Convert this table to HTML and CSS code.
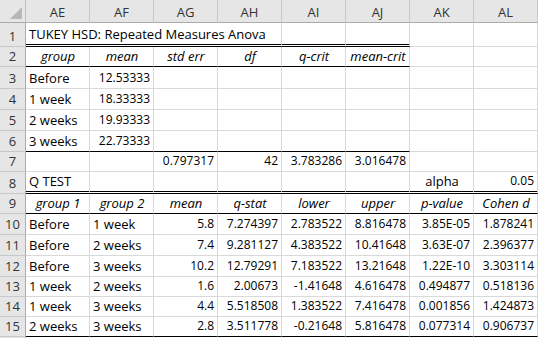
FILE: index.html
```html
<!DOCTYPE html>
<html>
<head>
<meta charset="utf-8">
<link rel="stylesheet" href="styles.css">
</head>
<body>
<div class="sheet">
  <div class="corner"><span class="tri"></span></div>
  <div class="ch">AE</div><div class="ch">AF</div><div class="ch">AG</div><div class="ch">AH</div>
  <div class="ch">AI</div><div class="ch">AJ</div><div class="ch">AK</div><div class="ch">AL</div>

  <div class="rh">1</div>
  <div class="c dbl span4">TUKEY HSD: Repeated Measures Anova</div>
  <div class="c dbl"></div><div class="c dbl"></div><div class="c"></div><div class="c"></div>

  <div class="rh">2</div>
  <div class="c h bb">group</div><div class="c h bb">mean</div><div class="c h bb">std err</div><div class="c h bb">df</div>
  <div class="c h bb">q-crit</div><div class="c h bb">mean-crit</div><div class="c"></div><div class="c"></div>

  <div class="rh">3</div>
  <div class="c">Before</div><div class="c n">12.53333</div><div class="c"></div><div class="c"></div>
  <div class="c"></div><div class="c"></div><div class="c"></div><div class="c"></div>

  <div class="rh">4</div>
  <div class="c">1 week</div><div class="c n">18.33333</div><div class="c"></div><div class="c"></div>
  <div class="c"></div><div class="c"></div><div class="c"></div><div class="c"></div>

  <div class="rh">5</div>
  <div class="c">2 weeks</div><div class="c n">19.93333</div><div class="c"></div><div class="c"></div>
  <div class="c"></div><div class="c"></div><div class="c"></div><div class="c"></div>

  <div class="rh">6</div>
  <div class="c bb">3 weeks</div><div class="c n bb">22.73333</div><div class="c bb"></div><div class="c bb"></div>
  <div class="c bb"></div><div class="c bb"></div><div class="c"></div><div class="c"></div>

  <div class="rh">7</div>
  <div class="c"></div><div class="c"></div><div class="c n">0.797317</div><div class="c n">42</div>
  <div class="c n">3.783286</div><div class="c n">3.016478</div><div class="c"></div><div class="c"></div>

  <div class="rh">8</div>
  <div class="c dbl">Q TEST</div><div class="c dbl"></div><div class="c dbl"></div><div class="c dbl"></div>
  <div class="c dbl"></div><div class="c dbl"></div><div class="c dbl ctr">alpha</div><div class="c dbl n">0.05</div>

  <div class="rh">9</div>
  <div class="c h bb">group 1</div><div class="c h bb">group 2</div><div class="c h bb">mean</div><div class="c h bb">q-stat</div>
  <div class="c h bb">lower</div><div class="c h bb">upper</div><div class="c h bb">p-value</div><div class="c h bb">Cohen d</div>

  <div class="rh">10</div>
  <div class="c">Before</div><div class="c">1 week</div><div class="c n">5.8</div><div class="c n">7.274397</div>
  <div class="c n">2.783522</div><div class="c n">8.816478</div><div class="c n">3.85E-05</div><div class="c n">1.878241</div>

  <div class="rh">11</div>
  <div class="c">Before</div><div class="c">2 weeks</div><div class="c n">7.4</div><div class="c n">9.281127</div>
  <div class="c n">4.383522</div><div class="c n">10.41648</div><div class="c n">3.63E-07</div><div class="c n">2.396377</div>

  <div class="rh">12</div>
  <div class="c">Before</div><div class="c">3 weeks</div><div class="c n">10.2</div><div class="c n">12.79291</div>
  <div class="c n">7.183522</div><div class="c n">13.21648</div><div class="c n">1.22E-10</div><div class="c n">3.303114</div>

  <div class="rh">13</div>
  <div class="c">1 week</div><div class="c">2 weeks</div><div class="c n">1.6</div><div class="c n">2.00673</div>
  <div class="c n">-1.41648</div><div class="c n">4.616478</div><div class="c n">0.494877</div><div class="c n">0.518136</div>

  <div class="rh">14</div>
  <div class="c">1 week</div><div class="c">3 weeks</div><div class="c n">4.4</div><div class="c n">5.518508</div>
  <div class="c n">1.383522</div><div class="c n">7.416478</div><div class="c n">0.001856</div><div class="c n">1.424873</div>

  <div class="rh">15</div>
  <div class="c bb">2 weeks</div><div class="c bb">3 weeks</div><div class="c n bb">2.8</div><div class="c n bb">3.511778</div>
  <div class="c n bb">-0.21648</div><div class="c n bb">5.816478</div><div class="c n bb">0.077314</div><div class="c n bb">0.906737</div>

  <div class="rh"></div>
  <div class="c"></div><div class="c"></div><div class="c"></div><div class="c"></div>
  <div class="c"></div><div class="c"></div><div class="c"></div><div class="c"></div>
</div>
</body>
</html>
```
FILE: styles.css
```css
* { box-sizing: border-box; }
html, body { margin: 0; padding: 0; background: #fff; }
body { width: 539px; height: 338px; overflow: hidden; }

.sheet {
  display: grid;
  grid-template-columns: 26px repeat(8, 64px);
  grid-template-rows: 23px 24px 20px 22px 21px 21px 21px 20px 22px 20px 21px 21px 21px 20px 20px 20px 21px;
  font-family: "Open Sans", "Liberation Sans", sans-serif;
  font-size: 13px;
  color: #000;
}

.corner {
  background: #e6e6e6;
  border-right: 1px solid #bfbfbf;
  border-bottom: 1px solid #ababab;
  position: relative;
}
.tri {
  position: absolute;
  right: 3px;
  bottom: 3px;
  width: 0;
  height: 0;
  border-left: 12px solid transparent;
  border-bottom: 12px solid #b7b7b7;
}

.ch {
  background: #e6e6e6;
  border-right: 1px solid #c8c8c8;
  border-bottom: 1px solid #ababab;
  color: #333;
  display: flex;
  align-items: flex-end;
  justify-content: center;
  padding-bottom: 2px;
  line-height: 16px;
}

.rh {
  background: #e6e6e6;
  border-right: 1px solid #ababab;
  border-bottom: 1px solid #c8c8c8;
  color: #333;
  display: flex;
  align-items: flex-end;
  justify-content: center;
  padding-bottom: 2px;
  line-height: 16px;
}

.c {
  border-right: 1px solid #d9d9d9;
  border-bottom: 1px solid #d9d9d9;
  display: flex;
  align-items: flex-end;
  justify-content: flex-start;
  padding: 0 2px 2px 3px;
  line-height: 16px;
  white-space: nowrap;
  overflow: hidden;
}

.span4 { grid-column: span 4; }

.n {
  justify-content: flex-end;
  font-size: 12px;
  padding-right: 3px;
}
.ctr { justify-content: center; }
.h { justify-content: center; font-style: italic; }

.bb { border-bottom: 1px solid #000; }
.dbl { border-bottom: 3px double #000; }
```
